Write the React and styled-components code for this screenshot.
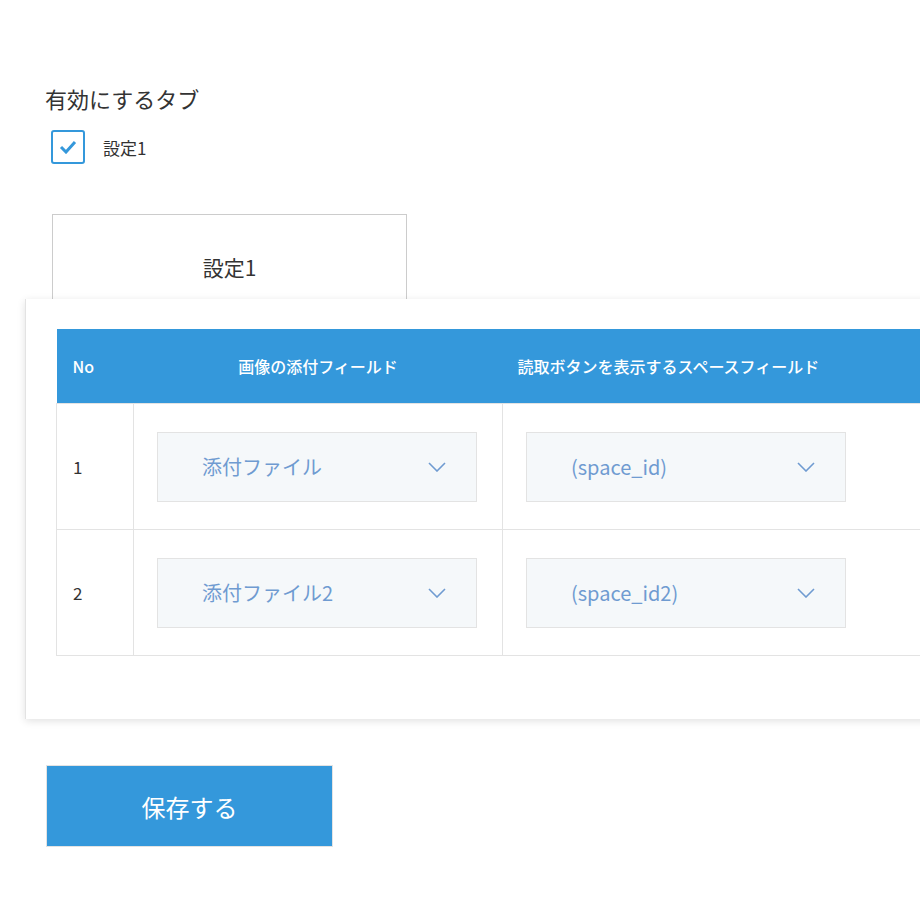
import React from "react";
import styled, { createGlobalStyle } from "styled-components";

const Global = createGlobalStyle`
  body {
    margin: 0;
    overflow: hidden;
    background: #fff;
    font-family: "Noto Sans CJK JP", "Noto Sans", sans-serif;
    color: #333;
  }
`;

const Page = styled.div`
  padding: 80px 0 40px 25px;
  width: 920px;
  box-sizing: border-box;
  overflow: hidden;
`;

const Heading = styled.div`
  font-size: 22px;
  margin-left: 20px;
  line-height: 36px;
  color: #333;
`;

const CheckRow = styled.label`
  display: flex;
  align-items: center;
  gap: 18px;
  margin: 14px 0 0 26px;
  font-size: 17px;
`;

const Box = styled.span`
  width: 34px;
  height: 34px;
  border: 2px solid #3498db;
  border-radius: 3px;
  display: flex;
  align-items: center;
  justify-content: center;
  box-sizing: border-box;
`;

const Tab = styled.div`
  margin: 50px 0 0 27px;
  width: 355px;
  height: 85px;
  box-sizing: border-box;
  border: 1px solid #ccc;
  border-bottom: none;
  display: flex;
  align-items: center;
  justify-content: center;
  font-size: 21px;
  padding-top: 20px;
  background: #fff;
`;

const Panel = styled.div`
  width: 960px;
  border-left: 1px solid #e3e3e3;
  box-shadow: 0 2px 8px rgba(0, 0, 0, 0.12);
  padding: 30px 0 63px 30px;
  background: #fff;
`;

const Table = styled.table`
  border-collapse: collapse;
  table-layout: fixed;
  width: 930px;
  font-size: 17px;
`;

const Th = styled.th`
  background: #3498db;
  color: #fff;
  font-weight: 500;
  font-size: 16px;
  height: 74px;
  padding: 0 0 0 ${(p) => p.$pad || "0"};
  text-align: ${(p) => (p.$left ? "left" : "center")};
  width: ${(p) => p.$w};
`;

const Td = styled.td`
  border: 1px solid #e3e3e3;
  height: 126px;
  padding: 0 0 0 ${(p) => p.$pad || "23px"};
  box-sizing: border-box;
`;

const Select = styled.div`
  width: 320px;
  height: 70px;
  box-sizing: border-box;
  background: #f5f8fa;
  border: 1px solid #e3e3e3;
  display: flex;
  align-items: center;
  justify-content: space-between;
  padding: 0 30px 0 44px;
  color: #6f9bd1;
  font-size: 20px;
`;

const Button = styled.button`
  margin: 46px 0 0 21px;
  width: 287px;
  height: 82px;
  background: #3498db;
  border: 1px solid #e3e3e3;
  color: #fff;
  font-size: 24px;
  font-family: inherit;
`;

const Chevron = () => (
  <svg width="18" height="10" viewBox="0 0 18 10" fill="none" stroke="#6f9bd1" strokeWidth="1.6">
    <path d="M1 1l8 8 8-8" />
  </svg>
);

const rows = [
  ["1", "添付ファイル", "(space_id)"],
  ["2", "添付ファイル2", "(space_id2)"],
];

export default function App() {
  return (
    <Page>
      <Global />
      <Heading>有効にするタブ</Heading>
      <CheckRow>
        <Box>
          <svg width="18" height="14" viewBox="0 0 18 14" fill="none" stroke="#3498db" strokeWidth="3">
            <path d="M2 7l5 5 9-10" />
          </svg>
        </Box>
        設定1
      </CheckRow>
      <Tab>設定1</Tab>
      <Panel>
        <Table>
          <thead>
            <tr>
              <Th $left $pad="16px" $w="61px">No</Th>
              <Th $w="369px">画像の添付フィールド</Th>
              <Th $left $pad="15px" $w="500px">読取ボタンを表示するスペースフィールド</Th>
            </tr>
          </thead>
          <tbody>
            {rows.map(([n, a, b]) => (
              <tr key={n}>
                <Td $pad="16px">{n}</Td>
                <Td>
                  <Select>{a}<Chevron /></Select>
                </Td>
                <Td>
                  <Select>{b}<Chevron /></Select>
                </Td>
              </tr>
            ))}
          </tbody>
        </Table>
      </Panel>
      <Button>保存する</Button>
    </Page>
  );
}
